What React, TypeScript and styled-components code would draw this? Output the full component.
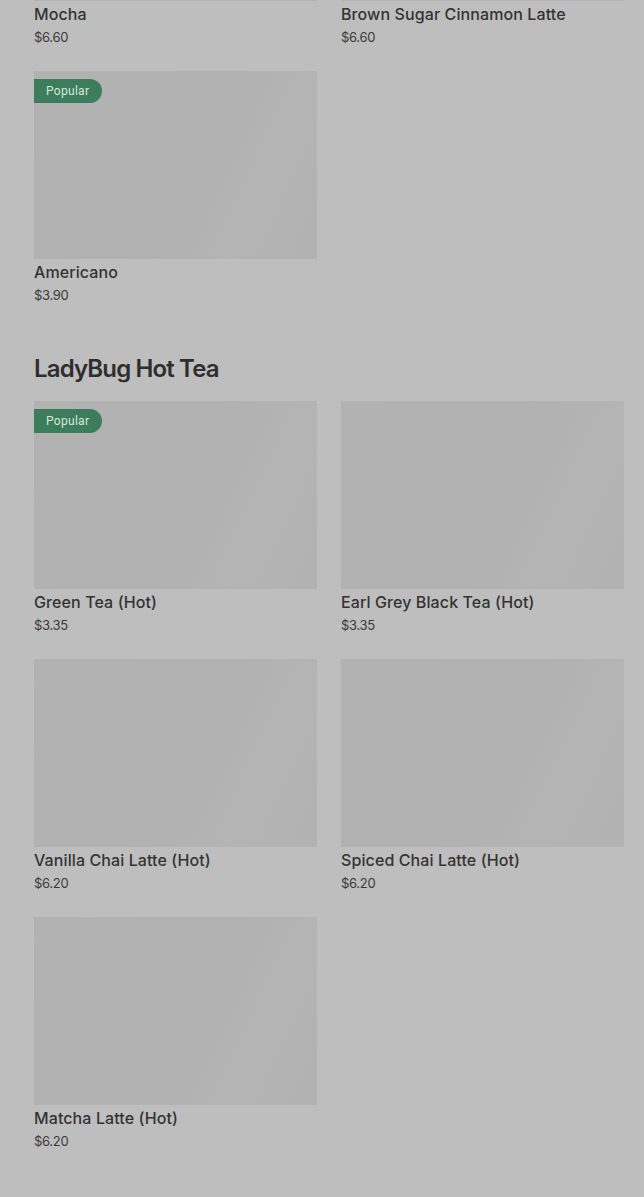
import React from "react";
import styled, { createGlobalStyle } from "styled-components";

const Global = createGlobalStyle`
  html, body { margin: 0; padding: 0; background: #bebebe; }
  body { font-family: Inter, "Noto Sans", sans-serif; color: #333; }
`;

const Page = styled.div`
  width: 644px;
  height: 1197px;
  overflow: hidden;
  background: #bebebe;
`;

const Scroller = styled.div`
  margin-top: -187px;
  padding: 0 20px 0 34px;
  display: flex;
  flex-direction: column;
`;

const Section = styled.section`
  display: flex;
  flex-direction: column;
`;

const Heading = styled.h2`
  margin: 47px 0 16px;
  font-size: 24px;
  line-height: 32px;
  font-weight: 600;
  letter-spacing: -0.85px;
  color: #2e2e2e;
`;

const Grid = styled.div`
  display: grid;
  grid-template-columns: 283px 283px;
  column-gap: 24px;
  row-gap: 23px;
`;

const Card = styled.div`
  display: flex;
  flex-direction: column;
`;

const Thumb = styled.div`
  position: relative;
  height: 188px;
  background: linear-gradient(115deg, #b2b2b2 0%, #b1b1b1 55%, #b4b4b4 75%, #b2b2b2 100%);
`;

const Badge = styled.span`
  position: absolute;
  left: 0;
  top: 8px;
  height: 24px;
  padding: 0 13px 0 12px;
  display: flex;
  align-items: center;
  background: #3c7d5b;
  color: #d8e6dd;
  font-family: Roboto, sans-serif;
  font-size: 12px;
  letter-spacing: 0.3px;
  border-radius: 0 12px 12px 0;
`;

const Name = styled.div`
  margin-top: 1px;
  font-size: 16px;
  line-height: 24px;
  font-weight: 500;
  color: #333;
  letter-spacing: 0.1px;
`;

const Price = styled.div`
  font-size: 13px;
  line-height: 22px;
  color: #3a3a3a;
  letter-spacing: -0.3px;
`;

type Item = { name: string; price: string; popular?: boolean };

const coffee: Item[] = [
  { name: "Mocha", price: "$6.60" },
  { name: "Brown Sugar Cinnamon Latte", price: "$6.60" },
  { name: "Americano", price: "$3.90", popular: true },
];

const tea: Item[] = [
  { name: "Green Tea (Hot)", price: "$3.35", popular: true },
  { name: "Earl Grey Black Tea (Hot)", price: "$3.35" },
  { name: "Vanilla Chai Latte (Hot)", price: "$6.20" },
  { name: "Spiced Chai Latte (Hot)", price: "$6.20" },
  { name: "Matcha Latte (Hot)", price: "$6.20" },
];

const ItemCard = ({ item }: { item: Item }) => (
  <Card>
    <Thumb>{item.popular && <Badge>Popular</Badge>}</Thumb>
    <Name>{item.name}</Name>
    <Price>{item.price}</Price>
  </Card>
);

export default function App() {
  return (
    <Page>
      <Global />
      <Scroller>
        <Section>
          <Grid>
            {coffee.map((i) => (
              <ItemCard key={i.name} item={i} />
            ))}
          </Grid>
        </Section>
        <Section>
          <Heading>LadyBug Hot Tea</Heading>
          <Grid>
            {tea.map((i) => (
              <ItemCard key={i.name} item={i} />
            ))}
          </Grid>
        </Section>
      </Scroller>
    </Page>
  );
}
